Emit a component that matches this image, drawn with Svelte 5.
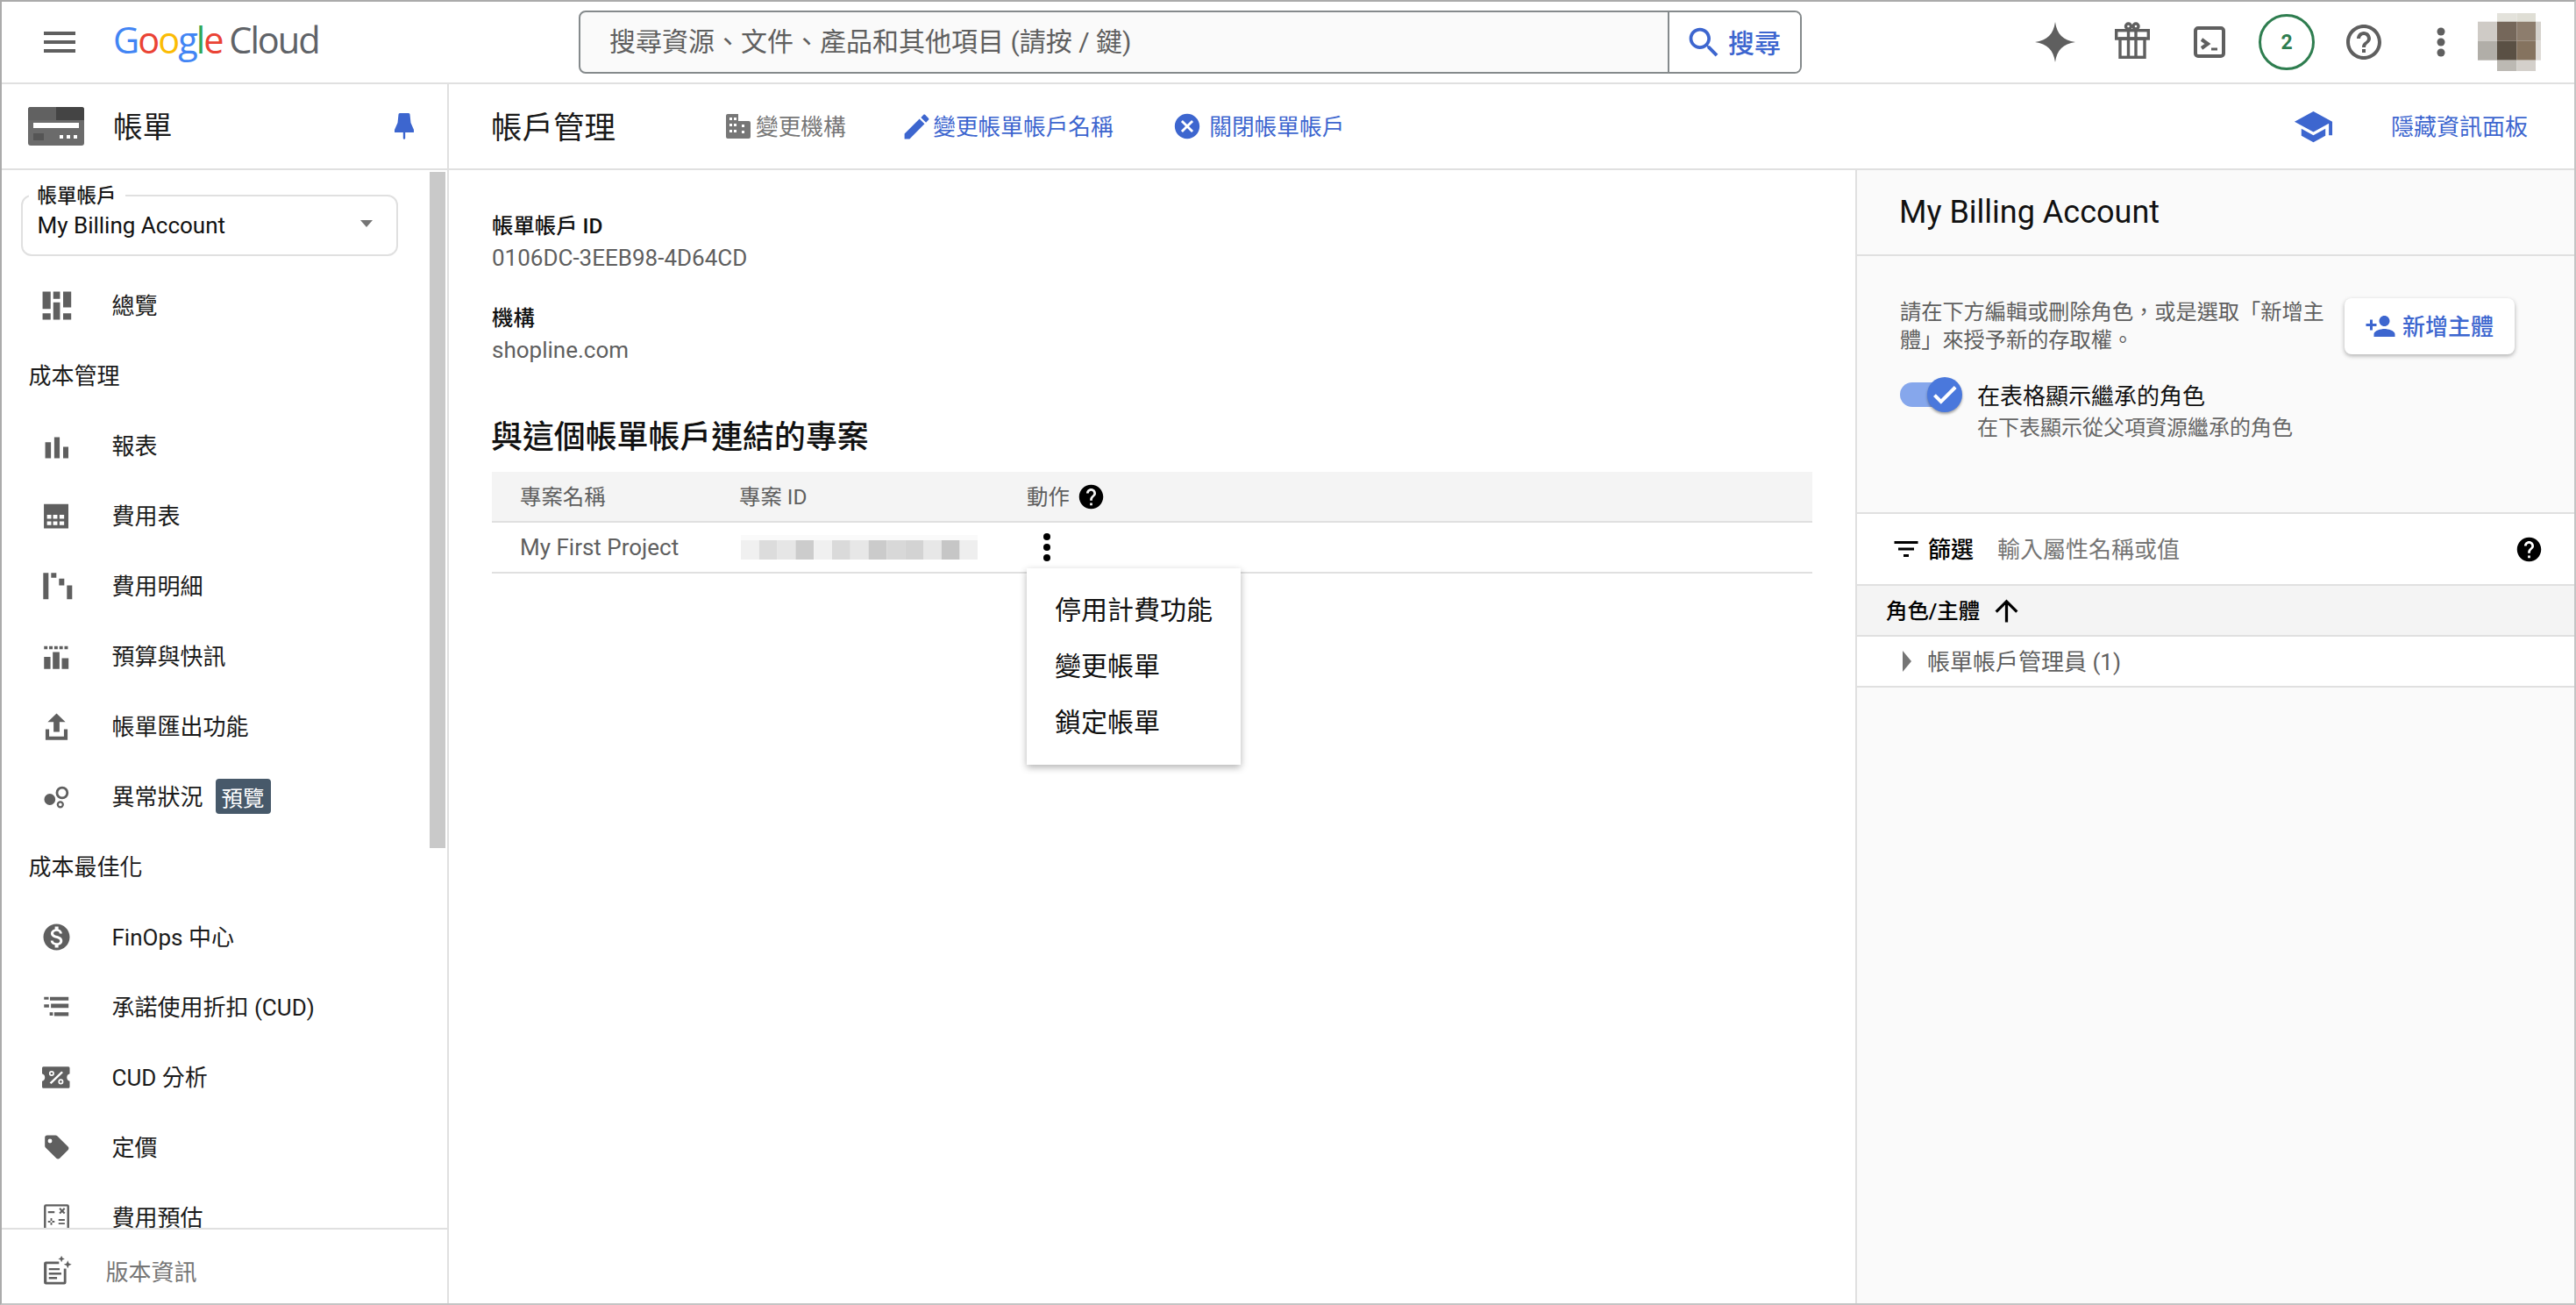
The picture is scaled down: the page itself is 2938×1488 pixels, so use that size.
<script>
  const r = (x, y, w, h) => `M${x} ${y}h${w}v${h}h${-w}z`;
  const c = (x, y, s) => `M${x - s} ${y}a${s} ${s} 0 1 0 ${2 * s} 0a${s} ${s} 0 1 0 ${-2 * s} 0z`;
  const dash = [0, 1, 2, 3, 4].map((i) => r(4.4 + i * 3.1, 5.7, 2.1, 1.9)).join('');

  const nav = [
    { label: '總覽', d: r(3.5, 3.5, 4.9, 10.5) + r(3.5, 16.7, 4.9, 3.8) + r(10, 3.5, 4.1, 4.3) + r(10, 10, 4.1, 10.5) + r(16, 3.5, 4.9, 9.5) + r(16, 16.7, 4.9, 3.8) },
    { heading: '成本管理' },
    { label: '報表', d: r(5.1, 9.7, 3.5, 9.8) + r(10.6, 6.7, 3.3, 12.8) + r(16, 12.5, 3.2, 7) },
    { label: '費用表', d: r(4.3, 4.6, 14.9, 14.9) + r(6.2, 11.2, 2.6, 2.4) + r(9.9, 11.2, 2.6, 2.4) + r(13.8, 11.2, 2.8, 2.4) + r(6.2, 15.2, 2.6, 2.3) + r(9.9, 15.2, 2.6, 2.3) + r(13.8, 15.2, 2.8, 2.3) },
    { label: '費用明細', d: r(3.9, 3.9, 3.2, 16) + r(8.7, 3.9, 3.2, 2.9) + r(13.5, 7.3, 3.2, 4.2) + r(18.3, 11.5, 3.2, 8.4) },
    { label: '預算與快訊', d: dash + r(4.4, 12.2, 3.9, 7.4) + r(9.7, 9.3, 4.1, 10.3) + r(15.2, 13.1, 4.1, 6.5) },
    { label: '帳單匯出功能', d: 'M12 4l-5.4 5.2h3.6v6h3.6v-6h3.6zM5.3 13.6h2.2v4.4h9v-4.4h2.2v6.5H5.3z' },
    { label: '異常狀況', badge: '預覽', d: c(7.9, 13.6, 3.4) + c(15.4, 9.6, 3.9) + c(15.4, 9.6, 2.4) + c(14.3, 16.7, 2.2) + c(14.3, 16.7, 1) },
    { heading: '成本最佳化' },
    { label: 'FinOps 中心', t: 'translate(2.4 2.4) scale(.8)', d: 'M12 2C6.480 2 2 6.480 2 12s4.480 10 10 10 10-4.480 10-10S17.520 2 12 2zm1.410 16.090V20h-2.670v-1.930c-1.710-.36-3.160-1.460-3.270-3.400h1.960c.1 1.050.820 1.870 2.650 1.870 1.960 0 2.400-.98 2.400-1.590 0-.83-.44-1.610-2.670-2.140-2.480-.6-4.180-1.620-4.180-3.670 0-1.720 1.390-2.840 3.110-3.210V4h2.670v1.950c1.860.450 2.790 1.860 2.850 3.390H14.300c-.05-1.110-.64-1.870-2.220-1.870-1.500 0-2.400.680-2.400 1.640 0 .840.650 1.390 2.670 1.910s4.180 1.390 4.180 3.910c-.01 1.830-1.380 2.830-3.120 3.160z' },
    { label: '承諾使用折扣 (CUD)', d: r(4.4, 5.7, 2.8, 1.6) + r(8, 5.7, 11.3, 2.1) + r(4.4, 10.3, 3, 1.8) + r(8.6, 9.9, 10.7, 2.5) + r(7.8, 15.1, 2, 2) + r(10.6, 15.1, 8.7, 2.2) },
    { label: 'CUD 分析', d: 'M4 5.5h15.2a.8.8 0 0 1 .8.8v3.4a2.4 2.4 0 0 0 0 4.6v3.4a.8.8 0 0 1-.8.8H4a.8.8 0 0 1-.8-.8v-3.4a2.4 2.4 0 0 0 0-4.6V6.3a.8.8 0 0 1 .8-.8z' + c(9, 9.6, 1.6) + c(9, 9.6, .7) + c(14.6, 14.6, 1.6) + c(14.6, 14.6, .7) + 'M15 8.2l1 .8-7.2 7-1-.8z' },
    { label: '定價', d: 'M19 11.4l-6.6-6.5a1.4 1.4 0 0 0-1-.4H6.300a1.4 1.4 0 0 0-1.400 1.400v5.100c0 .4.200.800.400 1l6.600 6.500c.300.300.600.400 1 .400s.700-.100 1-.400l5.100-5.100c.300-.300.400-.600.400-1s-.100-.700-.400-1zM8 9.300a1.300 1.300 0 1 1 0-2.600 1.300 1.300 0 0 1 0 2.600z' },
    { label: '費用預估', d: 'M5.500 3.800h13a1.200 1.200 0 0 1 1.200 1.200v14a1.200 1.200 0 0 1-1.200 1.200h-13a1.200 1.200 0 0 1-1.200-1.200V5a1.200 1.200 0 0 1 1.200-1.200z' + r(5.6, 5.1, 12.8, 13.8) + r(6.800, 8, 4, 1.200) + 'M13.500 6.700l.8-.8 1.100 1.100 1.100-1.100.8.8-1.100 1.100 1.100 1.100-.8.8-1.100-1.100-1.100 1.100-.8-.8 1.100-1.100z' + r(6.800, 13.800, 4, 1.100) + r(8.300, 12.300, 1, 4.100) + r(13.200, 12.800, 3.800, 1) + r(13.200, 15, 3.800, 1) },
  ];

  const versionIcon = 'M5.500 6.600h8v1.500h-7.500v10.900h10.400v-8.100h1.500v8.400a1.200 1.200 0 0 1-1.200 1.200H5.500a1.200 1.200 0 0 1-1.200-1.200V7.800a1.200 1.200 0 0 1 1.200-1.200z' + r(7.300, 10.600, 6.600, 1.300) + r(7.300, 13.300, 7.600, 1.300) + r(7.300, 16, 5, 1.300) + 'M15 3l.6 1.400 1.400.6-1.400.6-.6 1.400-.6-1.400-1.400-.6 1.400-.6zM18.800 6l.7 1.700 1.700.7-1.700.7-.7 1.700-.7-1.700-1.700-.7 1.700-.7z';

  const blur = ['#f0f0f0', '#dcdcdc', '#e6e6e6', '#cccccc', '#f0f0f0', '#dadada', '#e7e7e7', '#cbcbcb', '#d8d8d8', '#d3d3d3', '#e7e7e7', '#c6c6c6', '#eeeeee'];

  const avatar = [
    [22, 0, 22.5, 9.7, '#e3e2db'], [44.500, 0, 21.500, 9.7, '#dfded5'],
    [0, 9.7, 22, 22, '#cfcbc6'], [22, 9.7, 22.500, 22, '#75675a'], [44.500, 9.7, 21.500, 22, '#8d7d6d'], [66, 9.7, 6, 22, '#d5d2cd'],
    [0, 31.700, 22, 22, '#b1aea8'], [22, 31.700, 22.500, 22, '#5a5044'], [44.500, 31.700, 21.500, 22, '#85735f'], [66, 31.700, 6, 22, '#dedbd7'],
    [22, 53.700, 22.500, 12.300, '#bcb9b3'], [44.500, 53.700, 21.500, 12.300, '#d4d0cb'],
  ];

  const help = 'M12 2C6.480 2 2 6.480 2 12s4.480 10 10 10 10-4.480 10-10S17.520 2 12 2zm1 17h-2v-2h2v2zm2.070-7.750l-.9.920C13.450 12.900 13 13.500 13 15h-2v-.5c0-1.100.450-2.100 1.170-2.830l1.240-1.260c.370-.36.590-.86.590-1.410 0-1.100-.9-2-2-2s-2 .9-2 2H8c0-2.210 1.790-4 4-4s4 1.790 4 4c0 .880-.36 1.680-.93 2.250z';
</script>

<div class="frame">
  <header class="topbar">
    <svg class="menu" viewBox="0 0 24 24"><path d="M3 18h18v-2H3v2zm0-5h18v-2H3v2zm0-7v2h18V6H3z" /></svg>
    <div class="logo">
      <span class="g1">G</span><span class="g2">o</span><span class="g3">o</span><span class="g1">g</span><span class="g4">l</span><span class="g2">e</span>
      <span class="cloud">Cloud</span>
    </div>
    <div class="search">
      <div class="search-text">搜尋資源、文件、產品和其他項目 (請按 / 鍵)</div>
      <div class="search-btn">
        <svg viewBox="0 0 24 24"><path d="M15.500 14h-.79l-.28-.27C15.410 12.590 16 11.110 16 9.500 16 5.910 13.090 3 9.500 3S3 5.910 3 9.500 5.910 16 9.500 16c1.610 0 3.090-.59 4.230-1.570l.27.280v.790l5 4.990L20.490 19l-4.990-5zm-6 0C7.010 14 5 11.990 5 9.500S7.010 5 9.500 5 14 7.010 14 9.500 11.990 14 9.500 14z" /></svg>
        <span class="up">搜尋</span>
      </div>
    </div>
    <div class="tools">
      <div class="tool">
        <svg class="spark" viewBox="0 0 46 46"><path d="M23 0C25 14 32 21 46 23 32 25 25 32 23 46 21 32 14 25 0 23 14 21 21 14 23 0z" /></svg>
      </div>
      <div class="tool">
        <svg class="gift" viewBox="0 0 40 42">
          <rect x="1.700" y="9.700" width="36.600" height="9.300" />
          <rect x="6" y="19" width="28" height="21.300" />
          <path d="M15.500 10v30M24 10v30" />
          <circle cx="15.500" cy="5" r="3" /><circle cx="24" cy="5" r="3" />
        </svg>
      </div>
      <div class="tool">
        <svg class="term" viewBox="0 0 36 36">
          <rect x="2" y="2" width="32" height="32" rx="3" />
          <path class="term-chev" d="M9 15l7 5-7 5" />
          <path class="term-bar" d="M20 26h7" />
        </svg>
      </div>
      <div class="tool"><div class="count">2</div></div>
      <div class="tool">
        <svg class="helpo" viewBox="0 0 24 24"><path d="M11 18h2v-2h-2v2zm1-16C6.480 2 2 6.480 2 12s4.480 10 10 10 10-4.480 10-10S17.520 2 12 2zm0 18c-4.410 0-8-3.590-8-8s3.590-8 8-8 8 3.590 8 8-3.590 8-8 8zm0-14c-2.210 0-4 1.790-4 4h2c0-1.100.9-2 2-2s2 .9 2 2c0 2-3 1.750-3 5h2c0-2.250 3-2.500 3-5 0-2.210-1.790-4-4-4z" /></svg>
      </div>
      <div class="tool">
        <svg class="dots" viewBox="0 0 10 34"><circle cx="5" cy="5" r="4.500" /><circle cx="5" cy="17" r="4.500" /><circle cx="5" cy="29" r="4.500" /></svg>
      </div>
      <svg class="avatar" viewBox="0 0 72 66">
        {#each avatar as [x, y, w, h, f]}
          <rect {x} {y} width={w} height={h} fill={f} />
        {/each}
      </svg>
    </div>
  </header>

  <div class="body">
    <aside class="side">
      <div class="side-head">
        <svg class="bill" viewBox="0 0 64 44">
          <rect width="64" height="44" rx="3" fill="#6b6b6b" />
          <path d="M32 0h29a3 3 0 0 1 3 3v12H32z" fill="#444" />
          <path d="M3 0h29v15H0V3a3 3 0 0 1 3-3z" fill="#616161" />
          <rect x="6" y="18" width="52" height="6" fill="#fff" />
          <rect x="6" y="30" width="12" height="8" fill="#555" />
          <rect x="36" y="32" width="4" height="4" fill="#fff" /><rect x="44" y="32" width="4" height="4" fill="#fff" /><rect x="52" y="32" width="4" height="4" fill="#fff" />
        </svg>
        <div class="side-title">帳單</div>
        <svg class="pin" viewBox="0 0 22 30"><path d="M6 0h10a1.500 1.500 0 0 1 1.500 1.500L18.500 11 22 19v3H12.200v7l-1.200 1-1.200-1v-7H0v-3l3.500-8 1-9.500A1.500 1.500 0 0 1 6 0z" /></svg>
      </div>
      <div class="side-scroll">
        <div class="select">
          <span class="select-label">帳單帳戶</span>
          <span class="select-value">My Billing Account</span>
          <span class="select-arrow"></span>
        </div>
        {#each nav as n}
          {#if n.heading}
            <div class="section"><span class="up">{n.heading}</span></div>
          {:else}
            <div class="item">
              <svg viewBox="0 0 24 24"><path fill-rule="evenodd" d={n.d} transform={n.t} /></svg>
              <span class="up">{n.label}</span>
              {#if n.badge}<span class="badge">{n.badge}</span>{/if}
            </div>
          {/if}
        {/each}
        <div class="thumb"></div>
      </div>
      <div class="side-foot">
        <svg viewBox="0 0 24 24"><path fill-rule="evenodd" d={versionIcon} /></svg>
        <span>版本資訊</span>
      </div>
    </aside>

    <div class="main">
      <div class="main-head">
        <h1>帳戶管理</h1>
        <div class="act off">
          <svg class="domain" viewBox="0 0 28 28"><path fill-rule="evenodd" d="M2 0h12v8h12a2 2 0 0 1 2 2v16a2 2 0 0 1-2 2H2a2 2 0 0 1-2-2V2a2 2 0 0 1 2-2zM4 4v3h3V4zM9 4v3h3V4zM4 11v3h3v-3zM9 11v3h3v-3zM4 18v3h3v-3zM9 18v3h3v-3zM18 12v3h3v-3zM18 19v3h3v-3z" /></svg>
          <span class="up">變更機構</span>
        </div>
        <div class="act on a2">
          <svg class="ic37" viewBox="0 0 24 24"><path d="M3 17.250V21h3.750L17.810 9.940l-3.750-3.750L3 17.250zM20.710 7.040c.390-.39.390-1.020 0-1.410l-2.340-2.340c-.39-.39-1.020-.39-1.410 0l-1.830 1.830 3.750 3.750 1.830-1.830z" /></svg>
          <span class="up">變更帳單帳戶名稱</span>
        </div>
        <div class="act on a3">
          <svg class="ic34" viewBox="0 0 24 24"><path d="M12 2C6.470 2 2 6.470 2 12s4.470 10 10 10 10-4.470 10-10S17.530 2 12 2zm5 13.590L15.590 17 12 13.410 8.410 17 7 15.590 10.590 12 7 8.410 8.410 7 12 10.590 15.590 7 17 8.410 13.410 12 17 15.590z" /></svg>
          <span class="up">關閉帳單帳戶</span>
        </div>
        <div class="head-right">
          <svg class="cap" viewBox="0 0 24 24"><path d="M5 13.180v4L12 21l7-3.820v-4L12 17l-7-3.820zM12 3L1 9l11 6 9-4.910V17h2V9L12 3z" /></svg>
          <span class="up">隱藏資訊面板</span>
        </div>
      </div>

      <div class="columns">
        <section class="content">
          <div class="field">
            <div class="f-label">帳單帳戶 ID</div>
            <div class="f-value">0106DC-3EEB98-4D64CD</div>
          </div>
          <div class="field">
            <div class="f-label">機構</div>
            <div class="f-value">shopline.com</div>
          </div>
          <h2>與這個帳單帳戶連結的專案</h2>
          <div class="table">
            <div class="t-row t-head">
              <span class="up">專案名稱</span>
              <span class="up">專案 ID</span>
              <span class="t-action"><span class="up">動作</span>
                <svg viewBox="0 0 24 24"><path d={help} /></svg>
              </span>
            </div>
            <div class="t-row t-body">
              <span>My First Project</span>
              <svg class="blur" viewBox="0 0 270 28">
                <rect width="270" height="6" fill="#fafafa" />
                {#each blur as f, i}
                  <rect x={i * 20.800} y="6" width="20.800" height="22" fill={f} />
                {/each}
              </svg>
              <svg class="kebab" viewBox="0 0 10 34"><circle cx="5" cy="5" r="4" /><circle cx="5" cy="17" r="4" /><circle cx="5" cy="29" r="4" /></svg>
            </div>
            <div class="menu-pop">
              <div>停用計費功能</div>
              <div>變更帳單</div>
              <div>鎖定帳單</div>
            </div>
          </div>
        </section>

        <aside class="panel">
          <div class="p-title">My Billing Account</div>
          <div class="p-intro">
            <div class="p-row">
              <p>請在下方編輯或刪除角色，或是選取「新增主體」來授予新的存取權。</p>
              <div class="add">
                <svg viewBox="0 0 24 24"><path d="M15 12c2.210 0 4-1.790 4-4s-1.790-4-4-4-4 1.790-4 4 1.790 4 4 4zm-9-2V7H4v3H1v2h3v3h2v-3h3v-2H6zm9 4c-2.670 0-8 1.340-8 4v2h16v-2c0-2.660-5.330-4-8-4z" /></svg>
                <span class="up">新增主體</span>
              </div>
            </div>
            <div class="toggle-row">
              <div class="toggle">
                <div class="track"></div>
                <div class="knob">
                  <svg viewBox="0 0 24 24"><path d="M9 16.170L4.830 12l-1.420 1.410L9 19 21 7l-1.410-1.410z" /></svg>
                </div>
              </div>
              <div>
                <div class="t-label">在表格顯示繼承的角色</div>
                <div class="t-sub">在下表顯示從父項資源繼承的角色</div>
              </div>
            </div>
          </div>
          <div class="filter">
            <svg class="f-icon" viewBox="0 0 24 24"><path d="M10 18h4v-2h-4v2zM3 6v2h18V6H3zm3 7h12v-2H6v2z" /></svg>
            <span class="f-name up">篩選</span>
            <span class="f-ph up">輸入屬性名稱或值</span>
            <svg class="f-help" viewBox="0 0 24 24"><path d={help} /></svg>
          </div>
          <div class="r-head">
            <span class="up">角色/主體</span>
            <svg viewBox="0 0 24 24"><path d="M4 12l1.410 1.410L11 7.830V20h2V7.830l5.580 5.590L20 12l-8-8-8 8z" /></svg>
          </div>
          <div class="r-row">
            <span class="tri"></span>
            <span class="up">帳單帳戶管理員 (1)</span>
          </div>
        </aside>
      </div>
    </div>
  </div>
</div>

<style>
  :global(body) {
    margin: 0;
    background: #fff;
  }
  .frame {
    width: 2938px;
    height: 1488px;
    box-sizing: border-box;
    border: 2px solid #ababab;
    border-right-color: #c4c4c4;
    border-bottom-color: #c4c4c4;
    display: flex;
    flex-direction: column;
    overflow: hidden;
    font-family: Roboto, "Noto Sans CJK TC", sans-serif;
    font-size: 26px;
    color: #1a1a1a;
    background: #fff;
  }
  svg {
    display: block;
    flex: none;
    fill: currentColor;
  }
  .up {
    padding-bottom: 3px;
  }

  /* top bar */
  .topbar {
    height: 92px;
    flex: none;
    display: flex;
    align-items: center;
    padding-left: 42px;
    border-bottom: 2px solid #e0e0e0;
  }
  .menu {
    width: 48px;
    height: 48px;
    color: #5f5f5f;
    flex: none;
  }
  .logo {
    width: 531px;
    margin-left: 37px;
    flex: none;
    font-size: 41.500px;
    font-family: "Open Sans", sans-serif;
    letter-spacing: -2px;
    white-space: nowrap;
    line-height: 48px;
    padding-bottom: 6px;
    box-sizing: border-box;
  }
  .g1 { color: #4285f4; }
  .g2 { color: #ea4335; }
  .g3 { color: #fbbc05; }
  .g4 { color: #34a853; }
  .cloud {
    color: #5f6368;
    margin-left: -1px;
  }
  .search {
    width: 1395px;
    height: 72px;
    flex: none;
    box-sizing: border-box;
    display: flex;
    background: #fafafa;
    border: 2px solid #858a8c;
    border-radius: 8px;
  }
  .search-text {
    flex: 1;
    padding: 0 0 6px 33px;
    box-sizing: border-box;
    display: flex;
    align-items: center;
    font-size: 30px;
    color: #5f5f5f;
    white-space: nowrap;
  }
  .search-btn {
    width: 151px;
    flex: none;
    display: flex;
    align-items: center;
    background: #fff;
    border-left: 2px solid #858a8c;
    border-radius: 0 6px 6px 0;
    color: #3d66cf;
    font-size: 30px;
    font-weight: 500;
    padding-left: 17px;
    box-sizing: border-box;
  }
  .search-btn svg {
    width: 45px;
    height: 45px;
    margin-right: 5px;
  }
  .tools {
    margin-left: auto;
    padding-right: 38px;
    display: flex;
    align-items: center;
    color: #5f5f5f;
  }
  .tool {
    width: 88px;
    height: 92px;
    display: flex;
    align-items: center;
    justify-content: center;
  }
  .spark {
    width: 46px;
    height: 46px;
  }
  .gift {
    width: 40px;
    height: 42px;
    fill: none;
    stroke: #5f5f5f;
    stroke-width: 3.4;
    margin-top: -4px;
  }
  .term {
    width: 36px;
    height: 36px;
    fill: none;
    stroke: #5f5f5f;
    stroke-width: 4;
  }
  .term-chev {
    stroke-width: 4;
  }
  .term-bar {
    stroke-width: 3;
  }
  .count {
    width: 64px;
    height: 64px;
    box-sizing: border-box;
    border: 3.500px solid #2e7d4f;
    border-radius: 50%;
    color: #2e7d4f;
    font-size: 23px;
    font-weight: 700;
    display: flex;
    align-items: center;
    justify-content: center;
    background: #fff;
  }
  .helpo {
    width: 48px;
    height: 48px;
  }
  .dots {
    width: 10px;
    height: 34px;
  }
  .avatar {
    width: 72px;
    height: 66px;
    margin-left: -2px;
  }

  /* layout */
  .body {
    flex: 1;
    display: flex;
    min-height: 0;
  }
  .side {
    width: 510px;
    flex: none;
    box-sizing: border-box;
    display: flex;
    flex-direction: column;
    border-right: 2px solid #e0e0e0;
  }
  .side-head,
  .main-head {
    height: 96px;
    flex: none;
    display: flex;
    align-items: center;
    border-bottom: 2px solid #e0e0e0;
  }
  .side-head {
    padding: 0 26px 0 30px;
  }
  .bill {
    width: 64px;
    height: 44px;
  }
  .side-title {
    margin-left: 33px;
    padding-bottom: 4px;
    font-size: 33.700px;
  }
  .pin {
    width: 22px;
    height: 30px;
    margin-left: auto;
    margin-right: 12px;
    color: #3d66cf;
  }
  .side-scroll {
    flex: 1;
    min-height: 0;
    overflow: hidden;
    position: relative;
    padding-top: 28px;
    box-sizing: border-box;
  }
  .thumb {
    position: absolute;
    left: 488px;
    top: 2px;
    width: 18px;
    height: 771px;
    background: #c9c9c9;
  }
  .select {
    position: relative;
    width: 430px;
    height: 70px;
    box-sizing: border-box;
    margin: 0 0 16px 21.500px;
    border: 2px solid #e0e0e0;
    border-radius: 12px;
    display: flex;
    align-items: center;
    padding-left: 17px;
  }
  .select-label {
    position: absolute;
    left: 7px;
    top: -16px;
    padding: 0 10px;
    background: #fff;
    font-size: 22.500px;
    line-height: 30px;
    font-weight: 500;
  }
  .select-value {
    color: #111;
  }
  .select-arrow {
    position: absolute;
    left: 385px;
    top: 27px;
    border-left: 7.500px solid transparent;
    border-right: 7.500px solid transparent;
    border-top: 8.500px solid #757575;
  }
  .section {
    height: 80px;
    display: flex;
    align-items: center;
    padding-left: 30.500px;
    color: #1a1a1a;
  }
  .item {
    height: 80px;
    display: flex;
    align-items: center;
    padding-left: 39.500px;
  }
  .item svg {
    width: 45px;
    height: 45px;
    margin-right: 41px;
    color: #5f5f5f;
  }
  .badge {
    margin-left: 14px;
    width: 63px;
    height: 40px;
    border-radius: 4px;
    background: #47596a;
    color: #fff;
    font-size: 24.400px;
    display: flex;
    align-items: center;
    justify-content: center;
  }
  .side-foot {
    height: 86px;
    flex: none;
    box-sizing: border-box;
    border-top: 2px solid #e0e0e0;
    padding: 8px 0 0 39.500px;
    display: flex;
    align-items: center;
    color: #757575;
  }
  .side-foot svg {
    width: 45px;
    height: 45px;
    margin-right: 34px;
    color: #5f5f5f;
  }

  .main {
    flex: 1;
    min-width: 0;
    display: flex;
    flex-direction: column;
  }
  .main-head {
    padding: 0 53px 0 48px;
  }
  h1 {
    margin: 0;
    width: 268px;
    flex: none;
    padding-bottom: 4px;
    font-size: 35.500px;
    font-weight: 400;
    color: #1a1a1a;
  }
  .act {
    display: flex;
    align-items: center;
    font-size: 25.700px;
  }
  .act.off {
    color: #777;
  }
  .act.on {
    color: #3d66cf;
  }
  .domain {
    width: 28px;
    height: 28px;
    margin-right: 6px;
  }
  .a2 {
    margin-left: 62.500px;
  }
  .a3 {
    margin-left: 67px;
  }
  .ic37 {
    width: 37px;
    height: 37px;
  }
  .ic34 {
    width: 34px;
    height: 34px;
    margin-right: 8.500px;
  }
  .head-right {
    margin-left: auto;
    display: flex;
    align-items: center;
    color: #3d66cf;
  }
  .cap {
    width: 47px;
    height: 47px;
    margin-right: 65px;
  }

  .columns {
    flex: 1;
    min-height: 0;
    display: flex;
  }
  .content {
    flex: 1;
    min-width: 0;
    padding: 44px 49px 0 49px;
    position: relative;
  }
  .field {
    margin-bottom: 31px;
  }
  .f-label {
    font-size: 24.400px;
    font-weight: 500;
    line-height: 38px;
    padding-top: 1px;
    margin-bottom: -1px;
    color: #111;
  }
  .f-value {
    line-height: 36px;
    color: #5f5f5f;
  }
  h2 {
    margin: 55px 0 16px -1px;
    height: 50px;
    line-height: 54px;
    font-size: 35.900px;
    font-weight: 500;
    color: #111;
  }
  .table {
    position: relative;
  }
  .t-row {
    display: grid;
    grid-template-columns: 282px 328px 1fr;
    height: 56px;
    align-items: center;
    border-bottom: 2px solid #e0e0e0;
    color: #5f5f5f;
  }
  .t-row > :first-child {
    padding-left: 32px;
  }
  .t-head {
    background: #f4f4f4;
    font-size: 24.400px;
  }
  .t-action {
    display: flex;
    align-items: center;
    gap: 8px;
  }
  .t-action svg {
    width: 33px;
    height: 33px;
    color: #000;
  }
  .blur {
    width: 270px;
    height: 28px;
    margin-left: 2px;
  }
  .kebab {
    width: 10px;
    height: 34px;
    color: #000;
    margin-left: 18px;
  }
  .menu-pop {
    position: absolute;
    left: 610px;
    top: 110px;
    width: 244px;
    box-sizing: border-box;
    padding: 16px 0;
    background: #fff;
    box-shadow: 0 3px 8px rgba(0, 0, 0, 0.3);
    font-size: 30px;
    color: #111;
  }
  .menu-pop div {
    height: 64px;
    line-height: 64px;
    padding-left: 32px;
  }

  /* right panel */
  .panel {
    width: 820px;
    flex: none;
    box-sizing: border-box;
    border-left: 2px solid #e0e0e0;
    background: #fafafa;
    display: flex;
    flex-direction: column;
  }
  .p-title {
    height: 98px;
    box-sizing: border-box;
    border-bottom: 2px solid #e0e0e0;
    display: flex;
    align-items: center;
    padding-left: 48px;
    font-size: 36px;
    color: #111;
  }
  .p-intro {
    height: 294px;
    box-sizing: border-box;
    border-bottom: 2px solid #e0e0e0;
    padding: 48px 0 0 49px;
  }
  .p-row {
    display: flex;
    align-items: flex-start;
  }
  .p-row p {
    margin: 0;
    width: 507px;
    flex: none;
    font-size: 24.200px;
    line-height: 32px;
    color: #5f5f5f;
  }
  .add {
    width: 194px;
    height: 64px;
    flex: none;
    background: #fff;
    border-radius: 8px;
    box-shadow: 0 2px 5px rgba(0, 0, 0, 0.3);
    display: flex;
    align-items: center;
    color: #3d66cf;
    padding-left: 23px;
    box-sizing: border-box;
    font-weight: 500;
  }
  .add svg {
    width: 36px;
    height: 36px;
    margin-right: 7px;
  }
  .toggle-row {
    display: flex;
    margin-top: 26px;
  }
  .toggle {
    position: relative;
    width: 72px;
    height: 40px;
    margin-right: 16px;
    flex: none;
  }
  .track {
    position: absolute;
    left: 0;
    top: 6px;
    width: 56px;
    height: 28px;
    border-radius: 14px;
    background: #86a7ec;
  }
  .knob {
    position: absolute;
    left: 31px;
    top: 0;
    width: 40px;
    height: 40px;
    border-radius: 50%;
    background: #4a78dc;
    box-shadow: 0 2px 3px rgba(0, 0, 0, 0.35);
    display: flex;
    align-items: center;
    justify-content: center;
    color: #fff;
  }
  .knob svg {
    width: 34px;
    height: 34px;
    stroke: #fff;
    stroke-width: 0.8;
  }
  .t-label {
    line-height: 36px;
    margin-top: 4px;
    color: #111;
  }
  .t-sub {
    line-height: 36px;
    font-size: 24px;
    color: #666;
  }
  .filter {
    height: 82px;
    box-sizing: border-box;
    flex: none;
    background: #fff;
    border-bottom: 2px solid #e0e0e0;
    display: flex;
    align-items: center;
    padding: 0 35px 0 38px;
  }
  .f-icon {
    width: 36px;
    height: 36px;
    color: #000;
    margin-right: 7px;
  }
  .f-name {
    font-weight: 500;
    color: #000;
    margin-right: 27px;
  }
  .f-ph {
    color: #757575;
  }
  .f-help {
    width: 33px;
    height: 33px;
    margin-left: auto;
    color: #000;
  }
  .r-head {
    height: 58px;
    box-sizing: border-box;
    flex: none;
    background: #f4f4f4;
    border-bottom: 2px solid #e0e0e0;
    display: flex;
    align-items: center;
    padding-left: 33px;
    font-size: 24.400px;
    font-weight: 500;
    color: #000;
  }
  .r-head svg {
    width: 39px;
    height: 39px;
    margin-left: 11px;
  }
  .r-row {
    height: 58px;
    box-sizing: border-box;
    flex: none;
    background: #fff;
    border-bottom: 2px solid #e0e0e0;
    display: flex;
    align-items: center;
    padding-left: 52px;
    color: #5f5f5f;
  }
  .tri {
    width: 0;
    height: 0;
    border-top: 12.500px solid transparent;
    border-bottom: 12.500px solid transparent;
    border-left: 10px solid #757575;
    margin-right: 18px;
  }
</style>
